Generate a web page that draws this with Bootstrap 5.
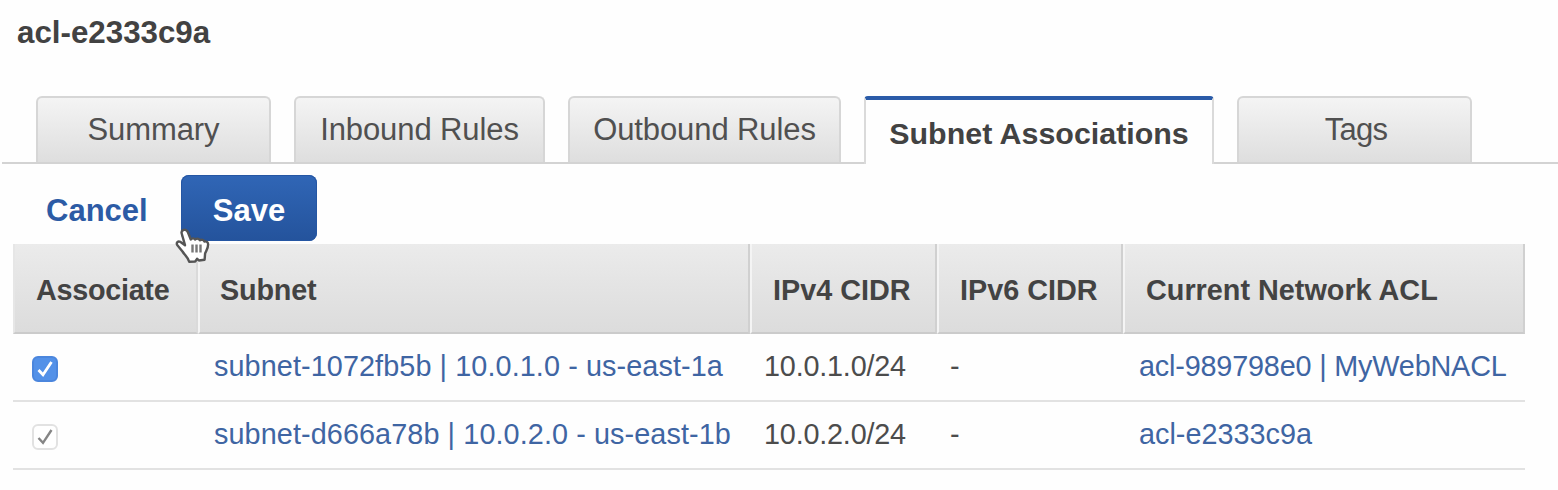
<!DOCTYPE html>
<html lang="en">
<head>
<meta charset="utf-8">
<title>Network ACL - Subnet Associations</title>
<meta name="viewport" content="width=device-width, initial-scale=1">
<link href="https://cdn.jsdelivr.net/npm/bootstrap@5.3.0/dist/css/bootstrap.min.css" rel="stylesheet">
<style>
  body { font-family: "Liberation Sans", Arial, sans-serif; font-size: 28.8px; color: #444; background: #fefefe; overflow: hidden; }
  .acl-title { font-size: 31.3px; line-height: 36px; padding: 15px 0 0 17px; height: 96px; color: #424242; }
  .acl-tabs { height: 68px; margin-left: 2px; padding-left: 34px; gap: 23px; border-bottom: 2px solid #d3d3d3; flex-wrap: nowrap; }
  .acl-tabs .nav-item { height: 68px; flex-shrink: 0; }
  .acl-tabs .nav-link { height: 66px; padding: 0; border: 2px solid #d6d6d6; border-bottom: 0; border-radius: 6px 6px 0 0; margin: 0;
    background: linear-gradient(#f4f4f4, #dedede); color: #505050; font-size: 31px; line-height: 63px; text-align: center; white-space: nowrap; letter-spacing: -.1px; }
  .acl-tabs .nav-link:hover { color: #505050; border-color: #d6d6d6; }
  .acl-tabs .nav-link.active { height: 68px; background: #fefefe; color: #424242; font-weight: 700; font-size: 30.4px; line-height: 66px; letter-spacing: 0;
    border-color: #dadada; border-top: 4px solid #2a5ba8; border-radius: 4px 4px 0 0; }
  .tab-w1 { width: 235px; } .tab-w2 { width: 251px; } .tab-w3 { width: 273px; } .tab-w4 { width: 350px; }
  .acl-tabs .tab-tags { letter-spacing: -.7px; padding-left: 3px; }
  .acl-actions { height: 80px; padding: 11px 0 0 46px; gap: 34px; }
  .acl-actions .btn { font-size: 31px; line-height: 60px; padding: 6px 0 0; border: 0; height: 66px; font-weight: 700; }
  .btn-cancel, .btn-cancel:hover { color: #2c5ba5; width: 101px; text-align: left; white-space: nowrap; }
  .btn-save, .btn-save:hover { width: 136px; color: #fff; border-radius: 8px; background: linear-gradient(#3066b6, #24539c); box-shadow: inset 0 0 0 1px #2556a3; }
  .hand-cursor { left: -6px; top: 51px; z-index: 3; }
  .acl-table { width: 1512px; margin: 0 0 0 13px; table-layout: fixed; border-collapse: separate; border-spacing: 0; color: #4c4c4c; --bs-table-bg: transparent; }
  .acl-table th { height: 90px; padding: 4px 0 0 21px; font-size: 28.8px; line-height: 84px; color: #434343; white-space: nowrap;
    background: linear-gradient(#ebebeb, #dcdcdc); border: 0; border-bottom: 2px solid #cbcbcb; border-right: 2px solid #d0d0d0; border-left: 2px solid #f4f4f4; }
  .acl-table th:first-child { border-left-color: #e6e6e6; border-right-color: #dadada; letter-spacing: -.3px; }
  .acl-table th:nth-child(2) { padding-left: 20px; letter-spacing: -.2px; }
  .acl-table td { height: 68px; padding: 0 0 0 16px; line-height: 65px; border: 0; border-bottom: 2px solid #e2e2e2; white-space: nowrap; vertical-align: top; }
  .acl-table td:nth-child(2) { letter-spacing: .09px; }
  .acl-table td:nth-child(3) { padding-left: 14px; letter-spacing: -.2px; }
  .acl-table td:nth-child(4) { padding-left: 13px; }
  .acl-table .acl-named { letter-spacing: -.18px; }
  .acl-table a { color: #3f65a3; text-decoration: none; }
  .acl-table .form-check-input { display: block; width: 26px; height: 26px; margin: 22px 0 0 3px; border-radius: 6px; border: 2px solid #e2e2e2; background-color: #fff; background-size: 22px;
    background-image: url("data:image/svg+xml,%3csvg xmlns='http://www.w3.org/2000/svg' viewBox='0 0 22 22'%3e%3cpath fill='none' stroke='%23858585' stroke-width='2.4' d='M4.500 12l4.500 4.800L17.500 4'/%3e%3c/svg%3e"); opacity: 1; }
  .acl-table .form-check-input.is-enabled { border-color: #4b86dd; background-color: #5391e8;
    background-image: url("data:image/svg+xml,%3csvg xmlns='http://www.w3.org/2000/svg' viewBox='0 0 22 22'%3e%3cpath fill='none' stroke='%23fff' stroke-width='2.8' d='M4.500 12l4.500 4.800L17.500 4'/%3e%3c/svg%3e"); }
</style>
</head>
<body>
<h1 class="acl-title fw-bold m-0">acl-e2333c9a</h1>

<ul class="nav nav-tabs acl-tabs">
  <li class="nav-item tab-w1"><a class="nav-link" href="#">Summary</a></li>
  <li class="nav-item tab-w2"><a class="nav-link" href="#">Inbound Rules</a></li>
  <li class="nav-item tab-w3"><a class="nav-link" href="#">Outbound Rules</a></li>
  <li class="nav-item tab-w4"><a class="nav-link active" href="#" aria-current="page">Subnet Associations</a></li>
  <li class="nav-item tab-w1"><a class="nav-link tab-tags" href="#">Tags</a></li>
</ul>

<div class="acl-actions d-flex">
  <button type="button" class="btn btn-cancel">Cancel</button>
  <div class="position-relative">
    <button type="button" class="btn btn-save">Save</button>
    <svg class="hand-cursor position-absolute" width="36" height="38" viewBox="0 0 36 38" aria-hidden="true">
      <path d="M8.500 4c2-.8 3.800.5 4.500 2.500l2.800 7c1-1.500 3.400-1.600 4.400 0 1.300-1.300 3.800-1.100 4.700.8 1.500-1 3.700-.6 4.500 1.200 1.700-.5 3.500.5 3.700 2.500.3 4-1.800 6.500-3 9.500l-.5 6.200-5.700.8-1.700-1.800-2 2.800-6 .2c-1.200-4.500-4.700-7-6.700-10.200L2.200 19c-1.200-2.300.8-4.300 3-3.200l4.800 3.400L6.700 7.500C6.300 6 7 4.500 8.500 4z" fill="#fff" stroke="#555" stroke-width="2.400" stroke-linejoin="round"/>
      <path d="M17.500 18.500v8M21.500 18.500v8M25.500 18.500v8" stroke="#777" stroke-width="2.400" fill="none"/>
    </svg>
  </div>
</div>

<table class="table acl-table">
  <colgroup><col style="width:185px"><col style="width:552px"><col style="width:187px"><col style="width:186px"><col style="width:402px"></colgroup>
  <thead>
    <tr><th>Associate</th><th>Subnet</th><th>IPv4 CIDR</th><th>IPv6 CIDR</th><th>Current Network ACL</th></tr>
  </thead>
  <tbody>
    <tr>
      <td><input class="form-check-input is-enabled" type="checkbox" checked aria-label="Associate subnet-1072fb5b"></td>
      <td><a href="#">subnet-1072fb5b | 10.0.1.0 - us-east-1a</a></td>
      <td>10.0.1.0/24</td><td>-</td>
      <td><a class="acl-named" href="#">acl-989798e0 | MyWebNACL</a></td>
    </tr>
    <tr>
      <td><input class="form-check-input" type="checkbox" checked disabled aria-label="Associate subnet-d666a78b"></td>
      <td><a href="#">subnet-d666a78b | 10.0.2.0 - us-east-1b</a></td>
      <td>10.0.2.0/24</td><td>-</td>
      <td><a href="#">acl-e2333c9a</a></td>
    </tr>
  </tbody>
</table>
<script src="https://cdn.jsdelivr.net/npm/bootstrap@5.3.0/dist/js/bootstrap.bundle.min.js"></script>
</body>
</html>
